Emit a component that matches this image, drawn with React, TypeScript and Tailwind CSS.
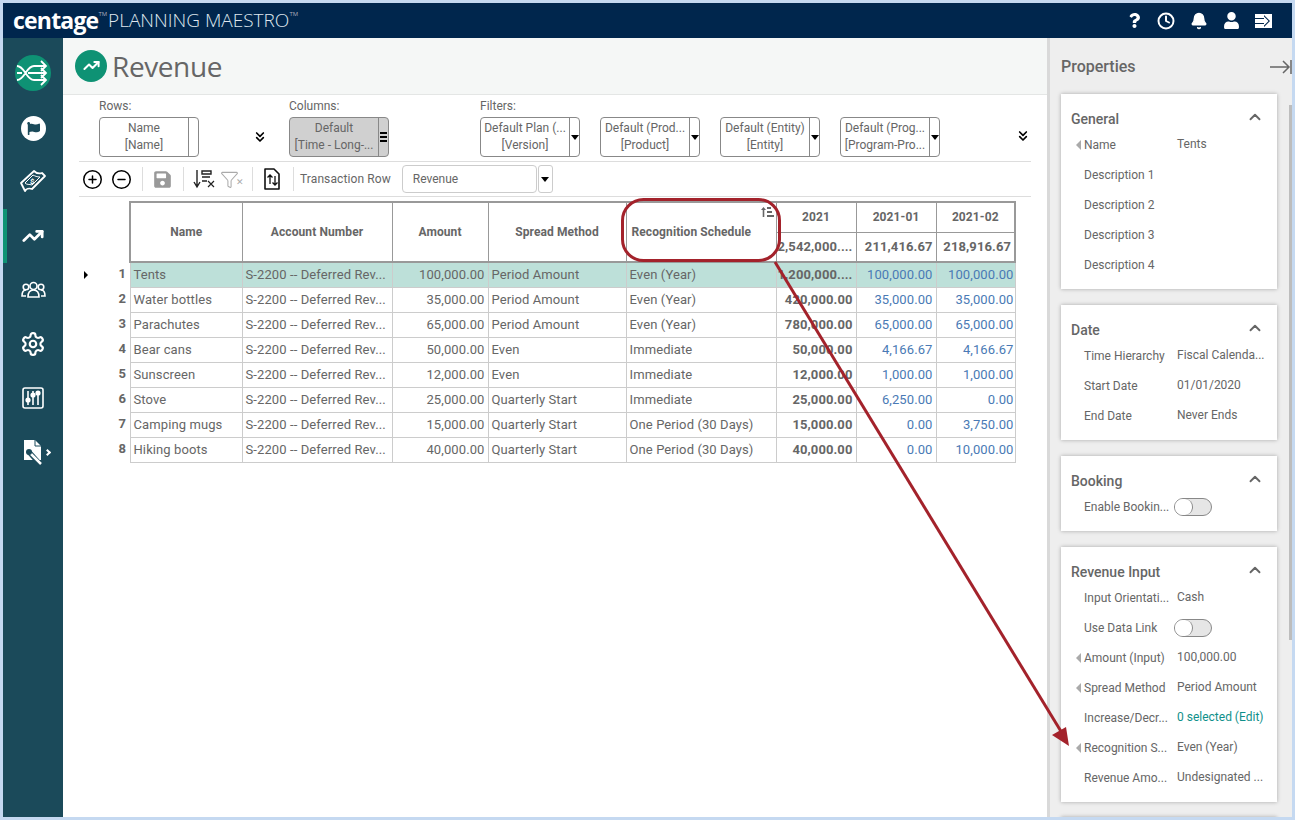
import { Bell, ChevronUp, ChevronsDown, CirclePlus, CircleMinus, Clock, Funnel, TrendingUp } from "lucide-react";
import { FaQuestion, FaUser, FaSave, FaFlag } from "react-icons/fa";

const rows = [
  ["Tents", "100,000.00", "Period Amount", "Even (Year)", "1,200,000....", "100,000.00", "100,000.00"],
  ["Water bottles", "35,000.00", "Period Amount", "Even (Year)", "420,000.00", "35,000.00", "35,000.00"],
  ["Parachutes", "65,000.00", "Period Amount", "Even (Year)", "780,000.00", "65,000.00", "65,000.00"],
  ["Bear cans", "50,000.00", "Even", "Immediate", "50,000.00", "4,166.67", "4,166.67"],
  ["Sunscreen", "12,000.00", "Even", "Immediate", "12,000.00", "1,000.00", "1,000.00"],
  ["Stove", "25,000.00", "Quarterly Start", "Immediate", "25,000.00", "6,250.00", "0.00"],
  ["Camping mugs", "15,000.00", "Quarterly Start", "One Period (30 Days)", "15,000.00", "0.00", "3,750.00"],
  ["Hiking boots", "40,000.00", "Quarterly Start", "One Period (30 Days)", "40,000.00", "0.00", "10,000.00"],
];

const Caret = () => (
  <span className="block w-0 h-0 border-l-[4px] border-r-[4px] border-t-[5px] border-l-transparent border-r-transparent border-t-black" />
);

const Picker = ({ a, b, width = "w-[100px]", grey = false, menu = false }: { a: string; b: string; width?: string; grey?: boolean; menu?: boolean }) => (
  <div className={`${width} h-10 flex border border-[#888] rounded-[4px] ${grey ? "bg-[#d0d0d0]" : "bg-white"}`}>
    <div className="flex-1 min-w-0 text-center text-xs leading-[17px] pt-[2px] text-[#666] whitespace-nowrap overflow-hidden">
      <div>{a}</div>
      <div>{b}</div>
    </div>
    <div className="w-[10px] border-l border-[#888] flex items-center justify-center">
      {menu ? (
        <div className="flex flex-col gap-[2px]">
          <span className="block w-[7px] h-[2px] bg-black" />
          <span className="block w-[7px] h-[2px] bg-black" />
          <span className="block w-[7px] h-[2px] bg-black" />
        </div>
      ) : a === "Name" ? null : (
        <Caret />
      )}
    </div>
  </div>
);

const Prop = ({ label, value, arrow, link, toggle }: { label: string; value?: string; arrow?: boolean; link?: boolean; toggle?: boolean }) => (
  <div className="h-[30px] flex items-center relative text-xs text-[#666]">
    {arrow && <span className="absolute left-[15px] top-[10px] w-0 h-0 border-y-[5px] border-r-[5px] border-y-transparent border-r-[#aaa]" />}
    <div className="ml-[23px] w-[93px] whitespace-nowrap">{label}</div>
    {toggle ? (
      <div className="w-[38px] h-[18px] rounded-full border border-[#888] bg-[#e6e6e6] -ml-[3px]">
        <div className="w-[18px] h-[16px] rounded-full bg-white border-r border-[#888]" />
      </div>
    ) : (
      <div className={`whitespace-nowrap -mt-[2px] ${link ? "text-[#0f8f8a]" : ""}`}>{value}</div>
    )}
  </div>
);

const Card = ({ title, className, children }: { title: string; className: string; children: React.ReactNode }) => (
  <div className={`w-[216px] bg-white shadow-[0_0_4px_rgba(0,0,0,0.3)] ${className}`}>
    <div className="h-[36px] pl-[10px] pr-[13px] flex items-end justify-between pb-[1px]">
      <span className="text-sm font-medium text-[#666]">{title}</span>
      <ChevronUp size={18} strokeWidth={2.5} className="text-[#666] mb-[3px]" />
    </div>
    {children}
  </div>
);

const NavIcon = ({ active, children }: { active?: boolean; children: React.ReactNode }) => (
  <div className={`h-[54px] flex items-center justify-center relative ${active ? "border-l-[4px] border-[#0e9274] pr-[4px]" : ""}`}>{children}</div>
);

export default function App() {
  return (
    <div className="w-[1295px] h-[820px] border-[3px] border-[#c5d9f1] flex flex-col relative overflow-hidden bg-white font-['Roboto',sans-serif]">
      {/* top bar */}
      <header className="h-[35px] shrink-0 bg-[#00264d] flex items-center justify-between pl-[10px] pr-[20px] text-white">
        <div className="flex items-start font-['Open_Sans',sans-serif]">
          <span className="text-[23px] font-bold leading-[30px] tracking-[-0.8px]">centage</span>
          <span className="text-[6px] mt-[5px] text-[#aab]">TM</span>
          <span className="text-[19px] leading-[31px] ml-[1px] text-[#dfe6ee] font-light">PLANNING MAESTRO</span>
          <span className="text-[6px] mt-[5px] text-[#aab]">TM</span>
        </div>
        <div className="flex items-center gap-[15px]">
          <FaQuestion size={15} />
          <Clock size={18} strokeWidth={2.6} />
          <Bell size={18} fill="white" />
          <FaUser size={17} />
          <svg width="17" height="16" viewBox="0 0 17 16" fill="white">
            <path d="M0 1h17v14H0v-4h9v3l6-6-6-6v3H0z" />
            <path d="M0 6h9V3.500L13.500 8 9 12.500V10H0z" />
          </svg>
        </div>
      </header>

      <div className="flex-1 flex min-h-0">
        {/* sidebar */}
        <nav className="w-[60px] shrink-0 bg-[#1b4a5a] pt-[16px] flex flex-col">
          <div className="h-[40px] flex justify-center mb-[7px]">
            <svg width="38" height="38" viewBox="0 0 38 38" fill="none">
              <circle cx="19" cy="19" r="18" fill="#0e9274" />
              <path d="M3 12c8 0 9 14 17 14h12M3 26c8 0 9-14 17-14h12M14 19h18M3 19h5" stroke="white" strokeWidth="1.8" />
              <path d="M27 7l5 5-5 5M27 14l5 5-5 5M27 21l5 5-5 5" stroke="white" strokeWidth="1.8" />
            </svg>
          </div>
          <NavIcon>
            <div className="w-[25px] h-[25px] rounded-full bg-white flex items-center justify-center">
              <FaFlag size={13} className="text-[#1b4a5a]" />
            </div>
          </NavIcon>
          <NavIcon>
            <svg width="28" height="28" viewBox="0 0 28 28" fill="none" stroke="white" strokeWidth="1.8">
              <path d="M2 15L15 3c2 2 5 3 8 2l3 3-13 13c-3-1-6 0-7 2z" strokeLinejoin="round" />
              <path d="M6 15l8-8c2 1 4 2 7 2l-8 8c-3-1-5 0-7-2z" strokeWidth="1" />
              <text x="11" y="16" fontSize="8" fill="white" stroke="none" fontWeight="bold">$</text>
            </svg>
          </NavIcon>
          <NavIcon active>
            <TrendingUp size={22} strokeWidth={3} className="text-white" />
          </NavIcon>
          <NavIcon>
            <svg width="25" height="18" viewBox="0 0 25 18" fill="none" stroke="white" strokeWidth="1.6">
              <circle cx="12.500" cy="5" r="3.500" />
              <circle cx="5" cy="6" r="2.800" />
              <circle cx="20" cy="6" r="2.800" />
              <path d="M7 16c0-5 2-7 5.500-7S18 11 18 16z" />
              <path d="M5 15H1c0-3 1-6 4-6M20 15h4c0-3-1-6-4-6" />
            </svg>
          </NavIcon>
          <NavIcon>
            <svg width="26" height="26" viewBox="0 0 24 24" fill="none" stroke="white" strokeWidth="2" strokeLinejoin="round">
              <path d="M12.220 2h-.44a2 2 0 0 0-2 2v.18a2 2 0 0 1-1 1.730l-.43.25a2 2 0 0 1-2 0l-.15-.08a2 2 0 0 0-2.730.73l-.22.380a2 2 0 0 0 .73 2.730l.15.1a2 2 0 0 1 1 1.720v.51a2 2 0 0 1-1 1.740l-.15.090a2 2 0 0 0-.73 2.730l.22.380a2 2 0 0 0 2.730.73l.15-.08a2 2 0 0 1 2 0l.43.25a2 2 0 0 1 1 1.730V20a2 2 0 0 0 2 2h.44a2 2 0 0 0 2-2v-.18a2 2 0 0 1 1-1.730l.43-.25a2 2 0 0 1 2 0l.15.080a2 2 0 0 0 2.730-.73l.22-.39a2 2 0 0 0-.73-2.730l-.15-.08a2 2 0 0 1-1-1.740v-.5a2 2 0 0 1 1-1.740l.15-.090a2 2 0 0 0 .73-2.730l-.22-.380a2 2 0 0 0-2.730-.73l-.15.08a2 2 0 0 1-2 0l-.43-.25a2 2 0 0 1-1-1.730V4a2 2 0 0 0-2-2z" />
              <circle cx="12" cy="12" r="3" />
            </svg>
          </NavIcon>
          <NavIcon>
            <svg width="22" height="22" viewBox="0 0 22 22" fill="none" stroke="white" strokeWidth="1.6">
              <rect x="1" y="1" width="20" height="20" rx="2" />
              <path d="M6 4v14M11 4v14M16 4v14" />
              <circle cx="6" cy="13" r="1.800" fill="white" />
              <circle cx="11" cy="8" r="1.800" fill="white" />
              <circle cx="16" cy="6" r="1.800" fill="white" />
            </svg>
          </NavIcon>
          <NavIcon>
            <div className="flex items-center ml-[7px]">
              <svg width="20" height="26" viewBox="0 0 20 26">
                <path d="M1 1h11l6 6v14H1z" fill="white" />
                <path d="M12 1v6h6" fill="none" stroke="#1b4a5a" />
                <path d="M6 13l9 10" stroke="#1b4a5a" strokeWidth="5" />
                <path d="M6 13l12 12" stroke="white" strokeWidth="2.500" />
                <circle cx="6" cy="13" r="3" fill="#1b4a5a" />
              </svg>
              <span className="block w-[5px] h-[5px] border-t-2 border-r-2 border-white rotate-45 ml-[2px]" />
            </div>
          </NavIcon>
        </nav>

        {/* main */}
        <main className="w-[984px] shrink-0 flex flex-col">
          <div className="h-[57px] shrink-0 bg-[#f5f7f6] border-b border-[#e4e6e5] pl-[12px] flex items-center pb-[1px]">
            <div className="w-8 h-8 rounded-full bg-[#0e9274] flex items-center justify-center">
              <TrendingUp size={17} strokeWidth={2.800} className="text-white" />
            </div>
            <h1 className="ml-[5px] text-[28px] text-[#666] tracking-[-0.4px] font-['Open_Sans',sans-serif]">Revenue</h1>
          </div>

          <div className="ml-[16px] w-[952px] h-[67px] shrink-0 border-b border-[#ddd] flex relative">
            <div className="ml-[20px] w-[190px]">
              <div className="text-xs text-[#666] leading-[22px] h-[22px]">Rows:</div>
              <Picker a="Name" b="[Name]" />
            </div>
            <div className="mt-[34px] w-[0px]">
              <ChevronsDown size={16} strokeWidth={2.500} className="-ml-[37px] text-black" />
            </div>
            <div className="w-[191px]">
              <div className="text-xs text-[#666] leading-[22px] h-[22px]">Columns:</div>
              <Picker a="Default" b="[Time - Long-..." grey menu />
            </div>
            <div>
              <div className="text-xs text-[#666] leading-[22px] h-[22px]">Filters:</div>
              <div className="flex gap-[20px]">
                <Picker a="Default Plan (..." b="[Version]" />
                <Picker a="Default (Prod..." b="[Product]" />
                <Picker a="Default (Entity)" b="[Entity]" />
                <Picker a="Default (Prog..." b="[Program-Pro..." />
              </div>
            </div>
            <ChevronsDown size={16} strokeWidth={2.500} className="absolute right-[0px] top-[33px] text-black" />
          </div>

          <div className="ml-[16px] w-[952px] h-[35px] shrink-0 border-b border-[#ddd] flex items-center pl-[3px]">
            <CirclePlus size={21} strokeWidth={1.700} className="text-black" />
            <CircleMinus size={21} strokeWidth={1.700} className="text-black ml-[8px]" />
            <div className="w-px h-6 bg-[#ddd] ml-[10px]" />
            <FaSave size={19} className="text-[#999] ml-[10px]" />
            <div className="w-px h-6 bg-[#ddd] ml-[11px]" />
            <svg width="24" height="22" viewBox="0 0 24 22" className="ml-[9px]" fill="none" stroke="#222" strokeWidth="1.400">
              <path d="M4 2v16M1 14l3 5 3-5M9 3h9v3H9zM9 9h8M9 13h5" />
              <path d="M15 13l6 6M21 13l-6 6" strokeWidth="1.200" />
            </svg>
            <Funnel size={19} strokeWidth={1.300} className="text-[#aaa] ml-[3px]" />
            <span className="text-[#aaa] text-[9px] -ml-[3px] mt-[8px]">✕</span>
            <div className="w-px h-6 bg-[#ddd] ml-[8px]" />
            <svg width="18" height="22" viewBox="0 0 18 22" className="ml-[10px]" fill="none" stroke="#111" strokeWidth="1.600">
              <path d="M2 1h9l5 5v15H2z" strokeLinejoin="round" />
              <path d="M7 16V7M4.500 9.500L7 7l2.500 2.500M12 8v9M9.500 14.500L12 17l2.500-2.500" strokeWidth="1.300" />
            </svg>
            <div className="w-px h-6 bg-[#ddd] ml-[12px]" />
            <span className="text-xs text-[#666] ml-[6px] tracking-[0.1px]">Transaction Row</span>
            <div className="ml-[11px] w-[135px] h-[28px] border border-[#ccc] rounded-[4px] flex items-center pl-[10px] text-xs text-[#666]">Revenue</div>
            <div className="ml-px w-[15px] h-[28px] border border-[#ccc] rounded-[3px] flex items-center justify-center"><Caret /></div>
          </div>

          {/* grid */}
          <div className="flex mt-[4px] ml-[20px]">
            <div className="w-[46px] pt-[60px] text-right">
              {rows.map((_, i) => (
                <div key={i} className="h-[25px] pr-[3px] relative text-[13px] font-bold text-[#666] leading-[25px]">
                  {i === 0 && <span className="absolute left-[1px] top-[10px] w-0 h-0 border-y-[4px] border-l-[4px] border-y-transparent border-l-black" />}
                  {i + 1}
                </div>
              ))}
            </div>
            <table className="table-fixed border-collapse w-[885px] text-[13px] text-[#666] tracking-[0.1px]">
              <colgroup>
                <col className="w-[112px]" />
                <col className="w-[150px]" />
                <col className="w-[96px]" />
                <col className="w-[138px]" />
                <col className="w-[150px]" />
                <col className="w-[80px]" />
                <col className="w-[80px]" />
                <col className="w-[79px]" />
              </colgroup>
              <thead className="border-2 border-[#999] font-bold text-xs">
                <tr className="h-[30px]">
                  {["Name", "Account Number", "Amount", "Spread Method"].map((h) => (
                    <th key={h} rowSpan={2} className="border border-[#999] font-bold text-[#666]">{h}</th>
                  ))}
                  <th rowSpan={2} className="border border-[#999] font-bold text-[#666] text-left pl-[5px] relative">
                    Recognition Schedule
                    <svg width="14" height="12" viewBox="0 0 14 12" className="absolute right-[2px] top-[3px]" fill="#666">
                      <path d="M1 4l2.500-3L6 4H4.300v7H2.700V4zM7 1h4v2H7zM7 5h5v2H7zM7 9h7v2H7z" />
                    </svg>
                  </th>
                  {["2021", "2021-01", "2021-02"].map((h) => (
                    <th key={h} className="border border-[#999] font-bold text-[#666]">{h}</th>
                  ))}
                </tr>
                <tr className="h-[30px] text-[13px]">
                  {["2,542,000....", "211,416.67", "218,916.67"].map((h) => (
                    <th key={h} className="border border-[#999] font-bold text-[#666] text-right pr-[3px]">{h}</th>
                  ))}
                </tr>
              </thead>
              <tbody>
                {rows.map((r, i) => (
                  <tr key={r[0]} className={`h-[25px] ${i === 0 ? "bg-[#bde0d9]" : ""}`}>
                    <td className="border border-[#ccc] pl-[3px] whitespace-nowrap overflow-hidden">{r[0]}</td>
                    <td className="border border-[#ccc] pl-[3px] whitespace-nowrap overflow-hidden">S-2200 -- Deferred Rev...</td>
                    <td className="border border-[#ccc] pr-[3px] text-right">{r[1]}</td>
                    <td className="border border-[#ccc] pl-[3px] whitespace-nowrap">{r[2]}</td>
                    <td className="border border-[#ccc] pl-[3px] whitespace-nowrap">{r[3]}</td>
                    <td className="border border-[#ccc] pr-[3px] text-right font-bold whitespace-nowrap overflow-hidden">{r[4]}</td>
                    <td className="border border-[#ccc] pr-[3px] text-right text-[#4a7ab5]">{r[5]}</td>
                    <td className="border border-[#ccc] pr-[1px] text-right text-[#4a7ab5]">{r[6]}</td>
                  </tr>
                ))}
              </tbody>
            </table>
          </div>
        </main>

        <div className="w-[3px] shrink-0 bg-[#d9d9d9]" />

        {/* properties */}
        <aside className="flex-1 bg-[#eeeeee] pl-[11px] relative overflow-hidden">
          <div className="h-[56px] flex items-center justify-between pr-[0px]">
            <span className="text-base font-medium text-[#666] pt-[1px]">Properties</span>
            <div className="flex items-center mt-[2px] text-[#666]">
              <svg width="22" height="14" viewBox="0 0 22 14" fill="none" stroke="currentColor" strokeWidth="1.500">
                <path d="M0 7h18M13 1l6 6-6 6M21 0v14" />
              </svg>
            </div>
          </div>
          <Card title="General" className="h-[195px]">
            <Prop label="Name" value="Tents" arrow />
            <Prop label="Description 1" />
            <Prop label="Description 2" />
            <Prop label="Description 3" />
            <Prop label="Description 4" />
          </Card>
          <Card title="Date" className="h-[135px] mt-[16px]">
            <Prop label="Time Hierarchy" value="Fiscal Calenda..." />
            <Prop label="Start Date" value="01/01/2020" />
            <Prop label="End Date" value="Never Ends" />
          </Card>
          <Card title="Booking" className="h-[75px] mt-[16px]">
            <Prop label="Enable Bookin..." toggle />
          </Card>
          <Card title="Revenue Input" className="h-[255px] mt-[16px]">
            <Prop label="Input Orientati..." value="Cash" />
            <Prop label="Use Data Link" toggle />
            <Prop label="Amount (Input)" value="100,000.00" arrow />
            <Prop label="Spread Method" value="Period Amount" arrow />
            <Prop label="Increase/Decr..." value="0 selected (Edit)" link />
            <Prop label="Recognition S..." value="Even (Year)" arrow />
            <Prop label="Revenue Amo..." value="Undesignated ..." />
          </Card>
          <div className="w-[216px] h-[20px] bg-white mt-[15px] shadow-[0_0_4px_rgba(0,0,0,0.3)]" />
          <div className="absolute right-0 top-[67px] w-[3px] h-[535px] bg-[#bdbdbd]" />
        </aside>
      </div>

      {/* callout drawn over the grid */}
      <svg className="absolute left-[-3px] top-[-3px] pointer-events-none" width="1295" height="820" fill="none">
        <rect x="622.500" y="199.500" width="157" height="61" rx="21" stroke="#a3222b" strokeWidth="3" />
        <path d="M775 262L1062 733" stroke="#a3222b" strokeWidth="3" />
        <path d="M1069 746L1052 735L1066 727z" fill="#a3222b" />
      </svg>
    </div>
  );
}
